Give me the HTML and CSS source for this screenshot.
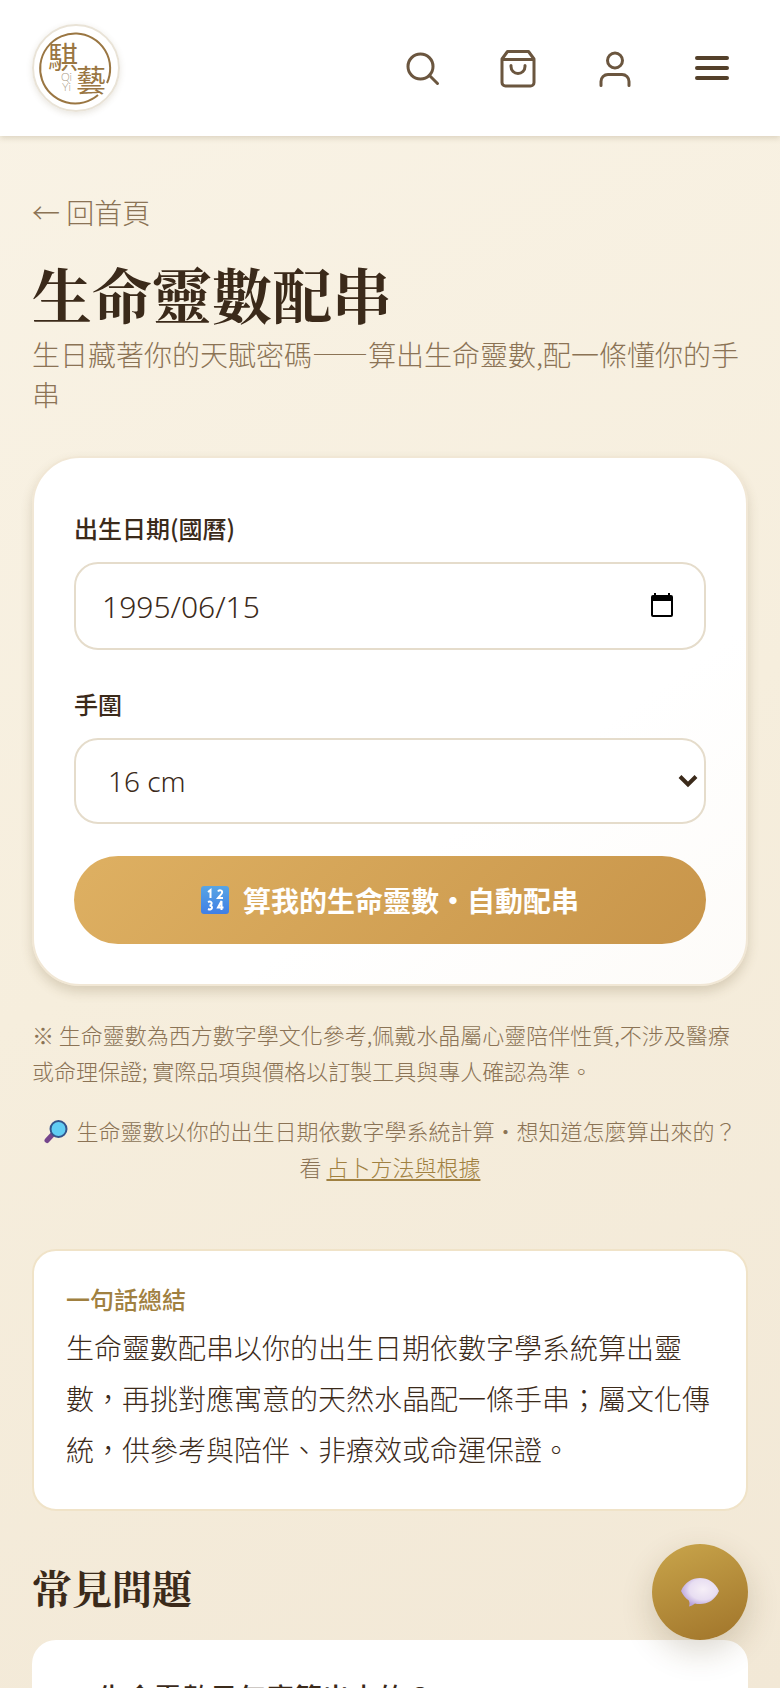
FILE: index.html
```html
<!DOCTYPE html>
<html lang="zh-TW">
<head>
<meta charset="utf-8">
<meta name="viewport" content="width=device-width, initial-scale=1">
<title>生命靈數配串</title>
<link rel="stylesheet" href="styles.css">
</head>
<body>
<div class="page">
  <header class="site-header">
    <a class="logo" href="#" aria-label="騏藝 Qi Yi">
      <svg viewBox="0 0 84 84" aria-hidden="true">
        <path class="logo-ring" d="M64 69A35 35 0 1 1 73 57"/>
        <text class="logo-han" x="14" y="42" font-size="30">騏</text>
        <text class="logo-han" x="42" y="65" font-size="30">藝</text>
        <text class="logo-latin" x="27" y="55" font-size="11">Qi</text>
        <text class="logo-latin" x="28" y="65" font-size="11">Yi</text>
      </svg>
    </a>
    <nav class="tools" aria-label="工具列">
      <button class="tool" type="button" aria-label="搜尋">
        <svg viewBox="0 0 40 40"><circle cx="19.500" cy="18.500" r="12.500"/><path d="M28.500 27.500 36.500 35.500"/></svg>
      </button>
      <button class="tool" type="button" aria-label="購物袋">
        <svg viewBox="0 0 40 40"><path d="M9.500 3.500h21l5.500 7.500v23.500a3.500 3.500 0 0 1-3.500 3.500h-25A3.500 3.500 0 0 1 4 34.500V11zM4 11.500h32M13 17.500v1a7 7 0 0 0 14 0v-1"/></svg>
      </button>
      <button class="tool" type="button" aria-label="會員">
        <svg viewBox="0 0 40 40"><circle cx="20" cy="12.500" r="7.500"/><path d="M6 37.500v-4a7 7 0 0 1 7-7h14a7 7 0 0 1 7 7v4"/></svg>
      </button>
      <button class="tool tool-menu" type="button" aria-label="選單">
        <svg viewBox="0 0 40 40"><path d="M5 10h30M5 20h30M5 30h30"/></svg>
      </button>
    </nav>
  </header>

  <main class="content">
    <a class="back" href="#">← 回首頁</a>
    <h1 class="title">生命靈數配串</h1>
    <p class="subtitle">生日藏著你的天賦密碼——算出生命靈數,配一條懂你的手串</p>

    <form class="card form">
      <label class="label" for="birth">出生日期(國曆)</label>
      <div class="field">
        <input class="control date" id="birth" type="text" inputmode="numeric" value="1995/06/15">
        <button class="picker" type="button" aria-label="選擇日期">
          <svg viewBox="0 0 24 26"><path d="M4 0h2v2h12V0h2v2h1a2 2 0 0 1 2 2v18a2 2 0 0 1-2 2H3a2 2 0 0 1-2-2V4a2 2 0 0 1 2-2h1zM3 8v14h18V8z"/></svg>
        </button>
      </div>
      <label class="label" for="wrist">手圍</label>
      <div class="field">
        <select class="control select" id="wrist"><option>16 cm</option></select>
        <svg class="chevron" viewBox="0 0 20 14" aria-hidden="true"><path d="m2 2.500 8 8 8-8"/></svg>
      </div>
      <button class="submit" type="button">
        <svg class="numbers" viewBox="0 0 28 28" aria-hidden="true">
          <defs><linearGradient id="blue" x2="0" y2="1"><stop stop-color="#58a5e4"/><stop offset="1" stop-color="#3f7fe6"/></linearGradient></defs>
          <rect width="28" height="28" rx="3" fill="url(#blue)" stroke="none"/>
          <path d="m7 6 2.500-2v8M17 5.500c1-2 5-1.500 4 1.500-.5 1.500-2.500 3-4 5h5M7 16c4-2 5 3 1.500 3.500C12.500 19.500 11.500 25 7 23M20.500 24v-9L17 21.500h5.500"/>
        </svg>
        <span>算我的生命靈數・自動配串</span>
      </button>
    </form>

    <p class="note">※ 生命靈數為西方數字學文化參考,佩戴水晶屬心靈陪伴性質,不涉及醫療或命理保證; 實際品項與價格以訂製工具與專人確認為準。</p>
    <p class="note method">
      <svg class="lens" viewBox="0 0 24 24" aria-hidden="true"><path d="m9 14-6 6.500" stroke="#75458c" stroke-width="5" stroke-linecap="round"/><circle cx="14.500" cy="9" r="8" fill="#61cdf3" stroke="#34548b" stroke-width="2"/></svg>
      生命靈數以你的出生日期依數字學系統計算・想知道怎麼算出來的？看 <a class="method-link" href="#">占卜方法與根據</a>
    </p>

    <section class="summary">
      <h2 class="summary-title">一句話總結</h2>
      <p class="summary-text">生命靈數配串以你的出生日期依數字學系統算出靈數，再挑對應寓意的天然水晶配一條手串；屬文化傳統，供參考與陪伴、非療效或命運保證。</p>
    </section>

    <h2 class="faq-title">常見問題</h2>
    <details class="faq">
      <summary class="question">生命靈數是怎麼算出來的？</summary>
    </details>
  </main>

  <button class="chat" type="button" aria-label="聊天">
    <svg viewBox="0 0 40 32" aria-hidden="true">
      <defs><radialGradient id="bubble" cx=".58" cy=".4" r=".6"><stop stop-color="#f6eff7"/><stop offset=".6" stop-color="#e8def2"/><stop offset="1" stop-color="#b9a3dc"/></radialGradient></defs>
      <path d="M1 15C5 6 12 2 20 2s15 4 19 13c-4 9-11 13-19 13-2 0-4 0-5-.5-2 1.500-4 2.500-6 3 .7-2 .7-4-.2-6C5 22 3 19 1 15z" fill="url(#bubble)"/>
    </svg>
  </button>
</div>
</body>
</html>
```
FILE: styles.css
```css
:root {
  --ink: #3b2a1a;
  --muted: #8b7355;
  --gold: #a08040;
  --line: #e5dccb;
  --sans: "Noto Sans", "Noto Sans CJK TC", sans-serif;
  --serif: "Noto Serif CJK TC", "Noto Serif TC", "Liberation Serif", "Noto Sans CJK TC", serif;
}

* {
  box-sizing: border-box;
}

body,
h1,
h2,
p {
  margin: 0;
}

body {
  color: var(--ink);
  font-family: "Noto Sans CJK TC", sans-serif;
  font-weight: 300;
}

button,
input,
select {
  font: inherit;
  color: inherit;
}

.page {
  height: 100vh;
  overflow-y: auto;
  scrollbar-width: none;
  background: linear-gradient(155deg, #f9f3e6 0%, #f6eedd 50%, #f2e8d6 100%);
}

.site-header {
  display: flex;
  align-items: center;
  justify-content: space-between;
  padding: 24px 32px;
  background: #fff;
  box-shadow: 0 2px 6px rgba(100, 80, 40, 0.2);
}

.logo {
  width: 88px;
  height: 88px;
  border: 2px solid #e9e3d7;
  border-radius: 50%;
  box-shadow: 0 2px 6px rgba(100, 80, 40, 0.15);
}

.logo svg {
  display: block;
}

.logo-ring {
  fill: none;
  stroke: #9a7642;
  stroke-width: 2;
}

.logo-han {
  fill: #9a7642;
  font-weight: 400;
}

.logo-latin {
  fill: #a99a84;
  font-family: Lato, sans-serif;
  font-weight: 300;
}

.tools {
  display: flex;
  gap: 25px;
}

.tool {
  display: grid;
  place-items: center;
  width: 72px;
  height: 72px;
  padding: 0;
  border: 0;
  background: none;
  color: #6b563f;
}

.tool svg {
  width: 40px;
  fill: none;
  stroke: currentColor;
  stroke-width: 3;
  stroke-linecap: round;
  stroke-linejoin: round;
}

.tool-menu {
  color: #54402a;
}

.tool-menu svg {
  stroke-width: 4;
}

.content {
  padding: 55px 32px;
}

.back {
  display: block;
  width: fit-content;
  margin-bottom: 24px;
  color: var(--muted);
  font-size: 28px;
  line-height: 42px;
  text-decoration: none;
}

.title {
  font-family: var(--serif);
  font-size: 60px;
  font-weight: 700;
  line-height: 72px;
}

.subtitle {
  margin: 5px 0 42px;
  color: var(--muted);
  font-size: 28px;
  line-height: 40px;
}

.card {
  display: flex;
  flex-direction: column;
  padding: 50px 40px 40px;
  border: 2px solid #f1e7d5;
  border-radius: 48px;
  background: linear-gradient(145deg, #fff 65%, #fdfbf8);
  box-shadow: 0 6px 12px rgba(100, 80, 40, 0.2);
}

.label {
  margin-bottom: 14px;
  font-size: 24px;
  font-weight: 500;
  line-height: 40px;
}

.field {
  position: relative;
  margin-bottom: 32px;
}

.field + .label {
  padding-top: 2px;
}

.control {
  display: block;
  width: 100%;
  height: 86px;
  padding: 0 32px;
  border: 2px solid var(--line);
  border-radius: 24px;
  background: #fff;
  font-family: var(--sans);
  font-size: 28px;
}

.date {
  height: 88px;
  padding: 0 26px;
  font-size: 30px;
}

.select {
  appearance: none;
}

.picker {
  position: absolute;
  top: 50%;
  right: 32px;
  width: 24px;
  height: 26px;
  padding: 0;
  border: 0;
  background: none;
  color: #000;
  transform: translateY(-50%);
}

.picker svg {
  display: block;
  fill: currentColor;
}

.chevron {
  position: absolute;
  top: 36px;
  right: 8px;
  width: 20px;
  fill: none;
  stroke: var(--ink);
  stroke-width: 4;
  pointer-events: none;
}

.submit {
  display: flex;
  align-items: center;
  justify-content: center;
  gap: 14px;
  height: 88px;
  padding: 0;
  border: 0;
  border-radius: 44px;
  background: linear-gradient(135deg, #deb062, #c8954a);
  color: #fff;
  font-size: 28px;
  font-weight: 700;
}

.numbers {
  width: 28px;
  fill: none;
  stroke: #fff;
  stroke-width: 2;
}

.note {
  margin-top: 30px;
  color: var(--muted);
  font-size: 22px;
  line-height: 36px;
}

.method {
  margin-top: 24px;
  padding: 0 10px;
  text-align: center;
}

.lens {
  width: 24px;
  margin-right: 4px;
  vertical-align: -4px;
}

.method-link {
  color: var(--gold);
  text-decoration-thickness: 2px;
  text-underline-offset: 3px;
}

.summary {
  margin-top: 65px;
  padding: 28px 32px 34px;
  border: 2px solid #f0e3c8;
  border-radius: 24px;
  background: #fff;
}

.summary-title {
  margin-bottom: 3px;
  color: var(--gold);
  font-size: 24px;
  font-weight: 500;
  line-height: 40px;
}

.summary-text {
  font-size: 28px;
  line-height: 51px;
}

.faq-title {
  margin: 48px 0 25px;
  font-family: var(--serif);
  font-size: 40px;
  font-weight: 700;
  line-height: 56px;
}

.faq {
  padding: 36px;
  border-radius: 24px;
  background: #fff;
}

.question {
  font-size: 28px;
  font-weight: 500;
  line-height: 42px;
}

.chat {
  position: fixed;
  right: 32px;
  bottom: 48px;
  display: grid;
  place-items: center;
  width: 96px;
  height: 96px;
  padding: 0;
  border: 0;
  border-radius: 50%;
  background: linear-gradient(160deg, #c9a54b, #a0742a);
  box-shadow: 0 12px 32px rgba(80, 60, 20, 0.2);
}

.chat svg {
  width: 40px;
}
```
